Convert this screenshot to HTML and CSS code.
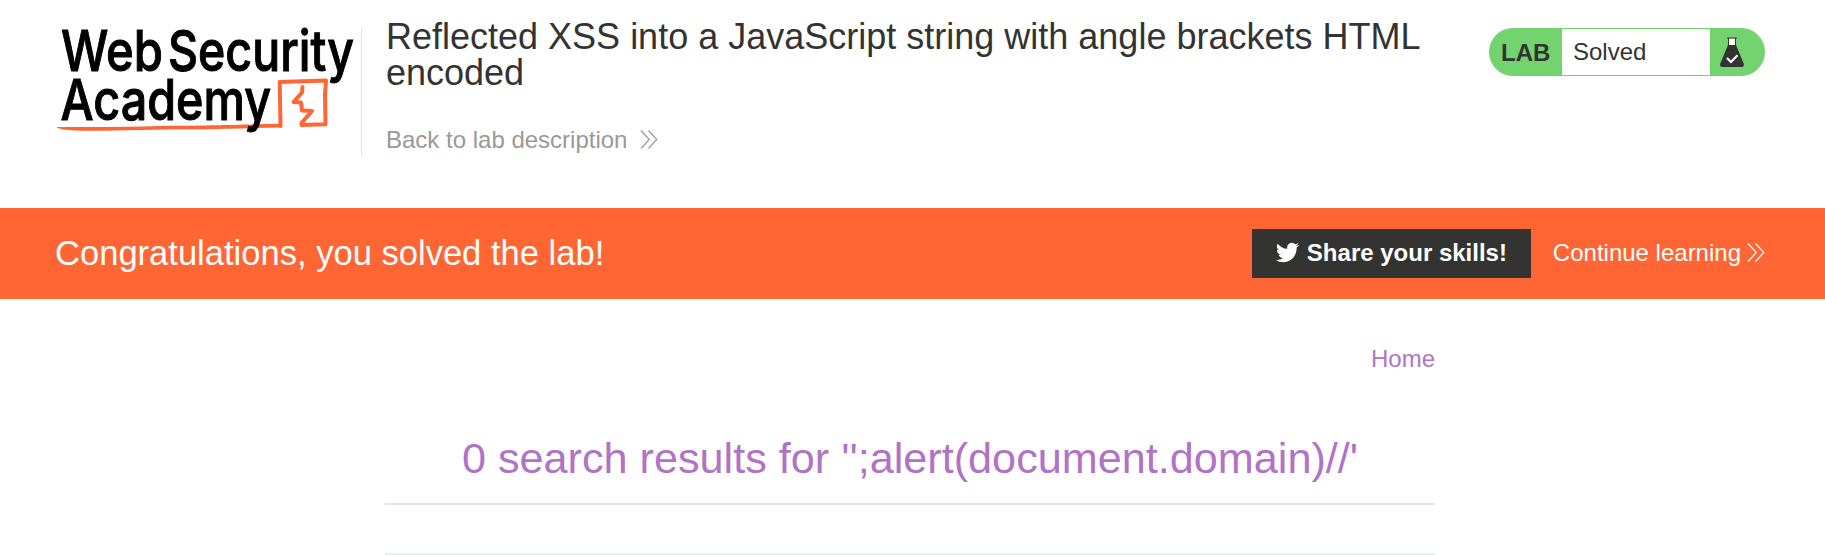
FILE: index.html
```html
<!DOCTYPE html>
<html lang="en">
<head>
<meta charset="utf-8">
<title>Reflected XSS into a JavaScript string with angle brackets HTML encoded</title>
<link rel="stylesheet" href="styles.css">
</head>
<body>
<header class="lab-header">
  <svg class="logo" width="306" height="129" viewBox="55 28 306 129" role="img" aria-label="Web Security Academy">
    <path class="logo-underline" d="M56 127C110 127.500 160 125.800 205 125.500C235 125.200 258 124 281 123.800L281 127.500C255 127.500 225 129.300 190 129.200C150 129.200 110 131.300 75 130.500Q60 130 56 127Z"/>
    <path class="logo-mark" d="M280.500 126L279.700 82L326 80.500L325 95L325.500 124.300L301.500 125L301.500 123L312 111L302 110.500L301 102.500L293.500 102L302 92.500L302.500 87"/>
    <g class="logo-text">
      <text x="61" y="71" textLength="102" lengthAdjust="spacingAndGlyphs">Web</text>
      <text x="168" y="71" textLength="186" lengthAdjust="spacingAndGlyphs">Security</text>
      <text x="60.500" y="119.500" textLength="210.500" lengthAdjust="spacingAndGlyphs">Academy</text>
    </g>
  </svg>
  <div class="title-block">
    <h2 class="title">Reflected XSS into a JavaScript string with angle brackets HTML encoded</h2>
    <a class="back-link">Back to lab description
      <svg class="chevrons" width="18" height="19" viewBox="0 0 18 19"><path d="M1 .5L9.300 9.500L1 18.500M8.500 .5L16.800 9.500L8.500 18.500"/></svg>
    </a>
  </div>
  <div class="status">
    <span class="status-label">LAB</span>
    <span class="status-value">Solved</span>
    <span class="status-icon">
      <svg width="24" height="31" viewBox="0 0 24 31">
        <path class="flask-neck" d="M8.500 1.500H15.500V9H8.500Z"/>
        <path class="flask-rim" d="M7 1H17M8.500 1V9M15.500 1V9"/>
        <path class="flask-body" d="M8 8H16L23.700 26.500Q24.500 30 22 30H2Q-.5 30 .3 26.500Z"/>
        <path class="flask-check" d="M7 21L11 25L17.500 18.300"/>
      </svg>
    </span>
  </div>
</header>
<section class="banner">
  <h4 class="banner-title">Congratulations, you solved the lab!</h4>
  <div class="banner-actions">
    <a class="share-button">
      <svg class="bird" width="23" height="21" viewBox="0 1.500 24 21" preserveAspectRatio="none"><path d="M23.950 4.570a10 10 0 0 1-2.820.780 4.960 4.960 0 0 0 2.160-2.730c-.950.560-2 .960-3.130 1.190a4.920 4.920 0 0 0-8.380 4.480C7.690 8.100 4.070 6.130 1.640 3.160a4.900 4.900 0 0 0-.670 2.480c0 1.710.870 3.210 2.190 4.100a4.900 4.900 0 0 1-2.230-.620v.060a4.920 4.920 0 0 0 3.950 4.830 5 5 0 0 1-2.210.080 4.940 4.940 0 0 0 4.600 3.420A9.870 9.870 0 0 1 0 19.540a13.990 13.990 0 0 0 7.550 2.210c9.050 0 14-7.500 14-13.990 0-.210 0-.420-.020-.630a9.940 9.940 0 0 0 2.460-2.550z"/></svg>
      <span>Share your skills!</span>
    </a>
    <a class="continue-link">Continue learning
      <svg class="chevrons" width="18" height="19" viewBox="0 0 18 19"><path d="M1 .5L9.300 9.500L1 18.500M8.500 .5L16.800 9.500L8.500 18.500"/></svg>
    </a>
  </div>
</section>
<main class="content">
  <nav class="nav"><a>Home</a></nav>
  <h1 class="results">0 search results for '';alert(document.domain)//'</h1>
  <div class="search"></div>
</main>
</body>
</html>
```
FILE: styles.css
```css
* { box-sizing: border-box; }
body {
  margin: 0;
  height: 555px;
  overflow: hidden;
  background: #fff;
  color: #333332;
  font: 24px/28px "Liberation Sans", Arial, sans-serif;
}
h1, h2, h4 { margin: 0; font-weight: 400; }
.lab-header {
  display: flex;
  align-items: flex-start;
  height: 208px;
  padding: 28px 60px 0 55px;
}
.logo { flex: none; overflow: visible; }
.logo-text { font: 500 56px Inter, sans-serif; fill: #000; stroke: #000; stroke-width: 1; }
.logo-underline { fill: #ff6633; }
.logo-mark { fill: none; stroke: #ff6633; stroke-width: 4; stroke-linejoin: round; stroke-linecap: round; }
.title-block {
  width: 1083px;
  height: 128px;
  padding-left: 24px;
  border-left: 1px solid #e5e5e5;
}
.title { margin-top: -9px; font-size: 36px; line-height: 36px; }
.back-link { display: flex; align-items: center; gap: 13px; margin-top: 35px; color: #999; }
.chevrons { fill: none; stroke: currentColor; stroke-width: 1.200; }
.back-link .chevrons { margin-bottom: 2px; }
.status {
  display: flex;
  width: 276px;
  height: 48px;
  margin-left: auto;
  padding: 1px;
  border-radius: 24px;
  background: #72d36f;
  line-height: 46px;
}
.status-label { width: 72px; padding-left: 11px; font-weight: 700; padding-top: 1px; }
.status-value { width: 148px; padding-left: 11px; background: #fff; }
.status-icon { padding: 8px 0 0 10px; line-height: 0; }
.flask-neck { fill: #fff; }
.flask-rim { fill: none; stroke: #333332; stroke-width: 1; }
.flask-body { fill: #333332; }
.flask-check { fill: none; stroke: #fff; stroke-width: 2; }
.banner {
  display: flex;
  align-items: center;
  justify-content: space-between;
  height: 91px;
  padding: 0 60px 0 55px;
  background: #ff6633;
  color: #fff;
}
.banner-title { padding-bottom: 2px; font-size: 34.560px; line-height: 40px; }
.banner-actions { display: flex; align-items: center; gap: 22px; }
.share-button {
  display: flex;
  align-items: center;
  gap: 8px;
  width: 279px;
  height: 49px;
  padding: 0 0 2px 24px;
  background: #333332;
  font-weight: 700;
  white-space: nowrap;
}
.bird { fill: #fff; }
.continue-link { display: flex; align-items: center; gap: 6px; padding-bottom: 2px; }
.content { width: 1050px; margin-left: 385px; color: #b073c5; }
.nav { display: flex; justify-content: flex-end; padding-top: 46px; }
.results {
  height: 132px;
  padding-top: 60px;
  border-bottom: 2px solid #e5e5e5;
  font-size: 43.200px;
  line-height: 50px;
  text-align: center;
}
.search { height: 50px; border-bottom: 2px solid #e8eef2; }
```
